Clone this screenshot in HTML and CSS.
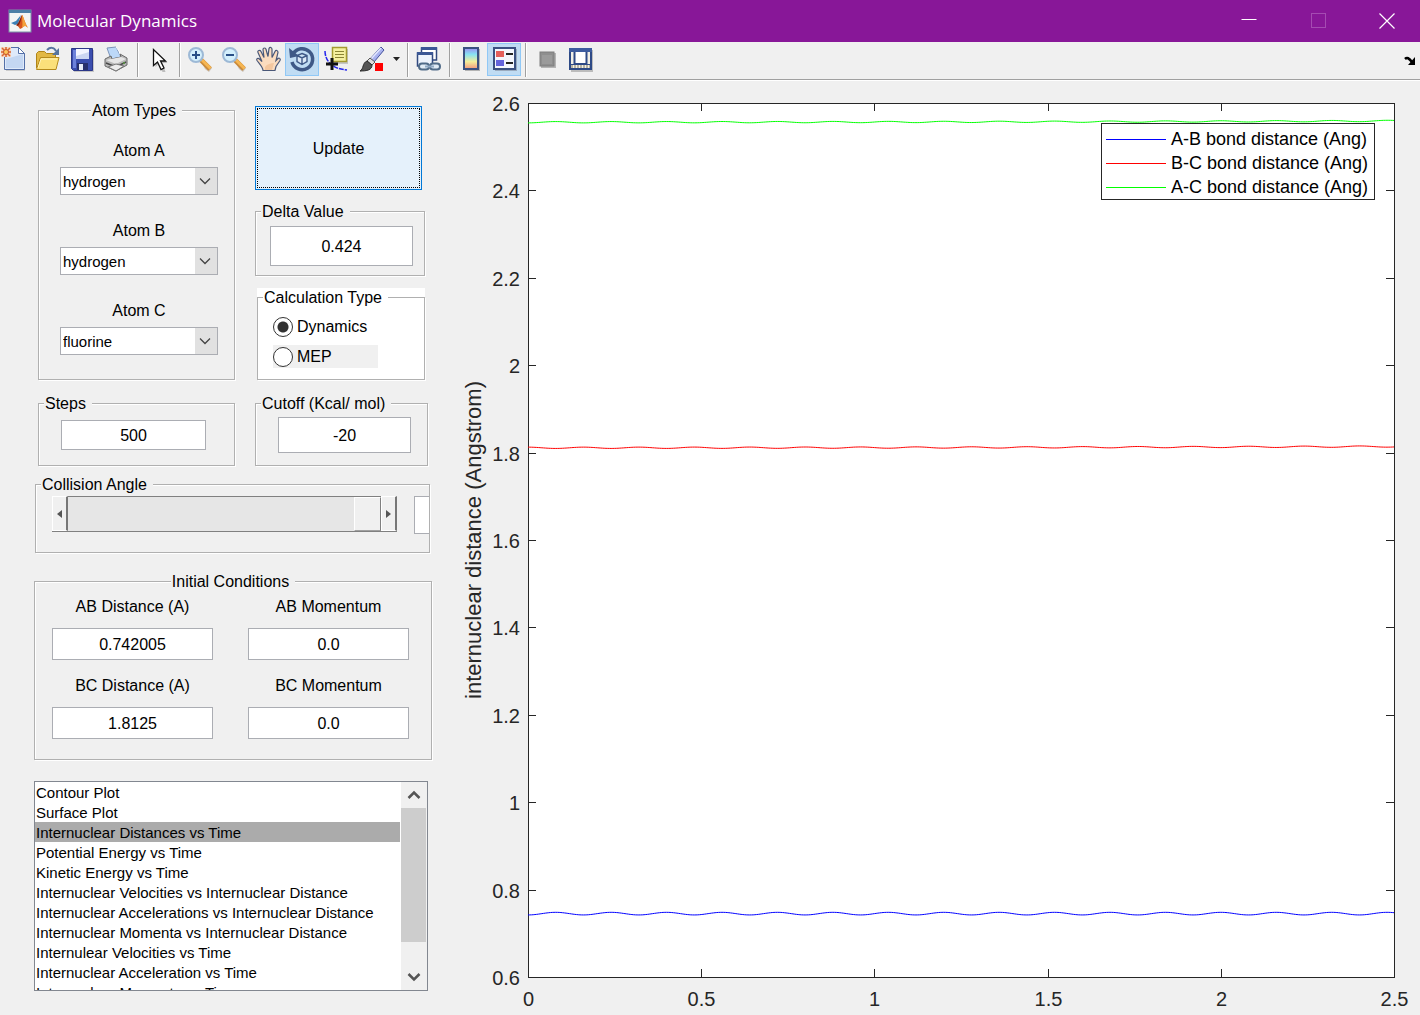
FILE: index.html
```html
<!DOCTYPE html>
<html lang="en">
<head>
    <meta charset="UTF-8">
    <meta name="viewport" content="width=device-width, initial-scale=1.0">
    <title>Molecular Dynamics</title>
    <link rel="stylesheet" href="styles.css">
</head>
<body>
    <header class="titlebar">
        <svg class="app-icon" width="24" height="24" viewBox="0 0 24 24" aria-hidden="true">
            <rect x="1" y="1" width="22" height="22" fill="#f4f4f4" stroke="#7b93a8"/>
            <rect x="1" y="1" width="22" height="3" fill="#4d7fa6"/>
            <path d="M3 14l5-2 5-6-3 9-3 1z" fill="#3c7fb5"/>
            <path d="M8 16c3-1 4-7 6-10 1 0 2 6 6 13-3-3-4-2-6 0l-2 1c-1-2-2-3-4-4z" fill="#d9541e"/>
            <path d="M14 6c1 0 2 6 6 13-3-3-4-2-6 0 1-4 0-9 0-13z" fill="#f3a13a"/>
            <path d="M8 16c3-1 4-7 6-10-1 5-2 9-4 11z" fill="#7a2318"/>
        </svg>
        <h1>Molecular Dynamics</h1>
        <div class="window-buttons">
            <button type="button" aria-label="Minimize"><svg width="16" height="16"><path d="M0.5 6.5h15" stroke="#fff"/></svg></button>
            <button type="button" aria-label="Maximize" disabled><svg width="16" height="16"><rect x="0.5" y="0.5" width="14" height="14" fill="none" stroke="#a54bb2"/></svg></button>
            <button type="button" aria-label="Close"><svg width="16" height="16"><path d="M0.5 0.5l15 15M15.5 0.5l-15 15" stroke="#fff" stroke-width="1.2"/></svg></button>
        </div>
    </header>

    <nav class="toolbar">
        <button type="button" class="tool" title="New Figure">
            <svg viewBox="0 0 34 33">
                <path d="M9 6.500h13l6 6V28H9z" fill="#a8a8a8" opacity=".5"/>
                <path d="M7.500 4.500h14l6 6v16h-20z" fill="#dfeafa" stroke="#5470a8"/>
                <path d="M9 16l17-5v14H9z" fill="#c4d7f2"/>
                <path d="M21.500 4.500v6h6z" fill="#fff" stroke="#5470a8"/>
                <rect x="4" y="4" width="10" height="10" fill="#f6d4c0"/>
                <path d="M9 4v10M4 9h10M5 5l8 8M13 5l-8 8" stroke="#d9662f" stroke-width="1.500"/>
                <circle cx="9" cy="9" r="2.500" fill="#ffc65c" stroke="#c7552b"/>
            </svg>
        </button>
        <button type="button" class="tool" title="Open File">
            <svg viewBox="0 0 34 33">
                <path d="M5.500 25V10.500l2-2h6l2 2h9v4" fill="#e2b844" stroke="#b08518"/>
                <path d="M5.500 26.500l4-12h18.500l-3 12z" fill="#fbe07a" stroke="#b58a1c"/>
                <path d="M7 25l3-9h16" fill="none" stroke="#fff3b8"/>
                <path d="M16 7c3-3 7-3 9 1" fill="none" stroke="#56749f" stroke-width="2"/>
                <path d="M28 5v7h-7z" fill="#56749f"/>
            </svg>
        </button>
        <button type="button" class="tool" title="Save Figure">
            <svg viewBox="0 0 34 33">
                <path d="M8 7h21v22H9z" fill="#aaa" opacity=".6"/>
                <path d="M6.500 5.500h21v22h-19l-2-2z" fill="#3b4eae" stroke="#2b3788"/>
                <path d="M8 7h3v18H8z" fill="#6d82da"/>
                <path d="M11 6h13v10H11z" fill="#f2f5ff"/>
                <path d="M24 16L11 16V13L24 9z" fill="#cbd6f2"/>
                <path d="M12 20h11v7H12z" fill="#28306c"/>
                <path d="M14 21h4v6h-4z" fill="#e8ecf7"/>
            </svg>
        </button>
        <button type="button" class="tool" title="Print Figure">
            <svg viewBox="0 0 34 33">
                <path d="M8 5l9-1 5 10-10 2z" fill="#bcd8f8" stroke="#7b93b8"/>
                <path d="M17 4l3 4 2 6" fill="none" stroke="#fff"/>
                <path d="M6 16l6-3 1 3 9-2-1-3 7 4v7l-11 6-11-5z" fill="#b9b9b9" stroke="#686868"/>
                <path d="M7 17l10 4 10-5-5-2-10 2z" fill="#e6e6e6"/>
                <path d="M7 20l10 4 10-5" fill="none" stroke="#484848" stroke-width="1.500"/>
                <path d="M9 24l8-3 8 2-8 5z" fill="#ececec" stroke="#777"/>
                <circle cx="25" cy="20" r="1" fill="#5a9b42"/>
            </svg>
        </button>
        <span class="separator"></span>
        <button type="button" class="tool" title="Edit Plot">
            <svg viewBox="0 0 34 33">
                <path d="M14.500 8v16l3-3 4 8h3l-3-9h5z" fill="#999" opacity=".6"/>
                <path d="M12.500 6.500v16l4-3.500 3.500 7.500 3-1.500-3.500-7h5z" fill="#fff" stroke="#111" stroke-width="1.300"/>
            </svg>
        </button>
        <span class="separator"></span>
        <button type="button" class="tool" title="Zoom In">
            <svg viewBox="0 0 34 33">
                <path d="M18 18l3-1 8 8-3 4-4-3z" fill="#b0a090" opacity=".6"/>
                <path d="M18 17l9 9" stroke="#c98a3c" stroke-width="5"/>
                <path d="M19 17l8.500 8.500" stroke="#f6b652" stroke-width="3"/>
                <circle cx="13" cy="12" r="7" fill="#d3effc" stroke="#9db9d6" stroke-width="2"/>
                <path d="M13 8v8M9 12h8" stroke="#284f87" stroke-width="2"/>
            </svg>
        </button>
        <button type="button" class="tool" title="Zoom Out">
            <svg viewBox="0 0 34 33">
                <path d="M18 18l3-1 8 8-3 4-4-3z" fill="#b0a090" opacity=".6"/>
                <path d="M18 17l9 9" stroke="#c98a3c" stroke-width="5"/>
                <path d="M19 17l8.500 8.500" stroke="#f6b652" stroke-width="3"/>
                <circle cx="13" cy="12" r="7" fill="#d3effc" stroke="#9db9d6" stroke-width="2"/>
                <path d="M9 12h8" stroke="#284f87" stroke-width="2"/>
            </svg>
        </button>
        <button type="button" class="tool" title="Pan">
            <svg viewBox="0 0 34 33">
                <path d="M12 27.500c0-3-3-6-6-10-1-2 1-3 3-1l2 2-4-9c-1-2 2-3 3-1l3 6-1-8c0-2 3-2 3 0l2 7 1-8c1-2 3-1 3 1v8l3-6c1-2 3-1 3 1l-2 8 2-2c1-1 3 0 2 2l-4 6-1 4z" fill="#fbdcbf" stroke="#4a5878" stroke-width="1.200"/>
                <path d="M14 24c2-3 6-4 9-4l-2 7h-7z" fill="#f4c79f"/>
            </svg>
        </button>
        <button type="button" class="tool active" title="Rotate 3D">
            <svg viewBox="0 0 34 33">
                <path d="M8 11a10.500 10.500 0 1 1-1 8" fill="none" stroke="#3f5987" stroke-width="3.500"/>
                <path d="M4 5l1 10 9-2z" fill="#3f5987"/>
                <path d="M17 10.500l5 2v6l-5 3-5-3v-6zM12 12.500l5 2.500 5-2.500M17 15v6" fill="#dbe8f6" stroke="#3f5987" stroke-width="1.400"/>
            </svg>
        </button>
        <button type="button" class="tool" title="Data Cursor">
            <svg viewBox="0 0 34 33">
                <path d="M15 6h14v15H15z" fill="#aaa" opacity=".6"/>
                <path d="M13.500 4.500h14v14h-14z" fill="#f5f0a0" stroke="#a49a30" stroke-width="1.500"/>
                <path d="M16 8.500h9M16 11.500h9M16 14.500h9" stroke="#8a8434"/>
                <path d="M6 8c0 5 2 10 6 13 4 4 8 5 16 6" fill="none" stroke="#2626ee" stroke-width="1.500" stroke-dasharray="5 1"/>
                <path d="M13 15v12M7 21h12" stroke="#111" stroke-width="3"/>
            </svg>
        </button>
        <button type="button" class="tool" title="Brush Data">
            <svg viewBox="0 0 34 33">
                <path d="M28 4l3 3-10 12-4-3z" fill="#a9b2ee" stroke="#44509c"/>
                <path d="M28 5L18 16" stroke="#e4e8ff" stroke-width="1.500"/>
                <path d="M17 15l5 4-3 3-5-4z" fill="#ddd" stroke="#555"/>
                <path d="M14 18l5 4c0 5-5 6-12 6 4-2 2-8 7-10z" fill="#555" stroke="#2b2b2b"/>
                <rect x="22" y="20" width="8" height="8" fill="#f00"/>
            </svg>
        </button>
        <button type="button" class="tool tool-caret" title="Brush options">
            <svg viewBox="0 0 16 33"><path d="M6 14h7l-3.500 4z" fill="#222"/></svg>
        </button>
        <span class="separator"></span>
        <button type="button" class="tool" title="Link Plot">
            <svg viewBox="0 0 34 33">
                <rect x="10.500" y="5" width="15" height="12" fill="#fff" stroke="#31497f" stroke-width="1.500"/>
                <path d="M10 4h16v3H10z" fill="#3b5795"/>
                <rect x="6.500" y="10" width="15" height="13" fill="#edf3fc" stroke="#31497f" stroke-width="1.500"/>
                <path d="M6 9h16v3H6z" fill="#3b5795"/>
                <rect x="8" y="20.500" width="10" height="6" rx="3" fill="#e0ebf5" stroke="#506b88" stroke-width="2"/>
                <rect x="19" y="20.500" width="10" height="6" rx="3" fill="#e0ebf5" stroke="#506b88" stroke-width="2"/>
                <path d="M14 23.500h9" stroke="#8fa9c4" stroke-width="2"/>
            </svg>
        </button>
        <span class="separator"></span>
        <button type="button" class="tool" title="Insert Colorbar">
            <svg viewBox="0 0 34 33">
                <defs>
                    <linearGradient id="colorbar" x1="0" y1="0" x2="0" y2="1">
                        <stop offset="0" stop-color="#9d8cf0"/>
                        <stop offset=".3" stop-color="#86e2f4"/>
                        <stop offset=".65" stop-color="#f4ee9a"/>
                        <stop offset="1" stop-color="#f4957c"/>
                    </linearGradient>
                </defs>
                <path d="M12 6h15v22H12z" fill="#999" opacity=".7"/>
                <rect x="11" y="5" width="14" height="21" fill="url(#colorbar)" stroke="#3a5080" stroke-width="2"/>
            </svg>
        </button>
        <button type="button" class="tool active" title="Insert Legend">
            <svg viewBox="0 0 34 33">
                <path d="M8 6h22v22H8z" fill="#8a96a8" opacity=".7"/>
                <rect x="7" y="5" width="21" height="21" fill="#f3f6fd" stroke="#3a5080" stroke-width="2"/>
                <rect x="9" y="8" width="8" height="6" fill="#e4605c"/>
                <rect x="9" y="17" width="8" height="6" fill="#6464dc"/>
                <path d="M19 11h7M19 20h7" stroke="#222" stroke-width="2"/>
            </svg>
        </button>
        <span class="separator"></span>
        <button type="button" class="tool" title="Hide Plot Tools">
            <svg viewBox="0 0 34 33">
                <path d="M12 10h15v15H12z" fill="#b5b5b5"/>
                <rect x="11" y="9" width="14" height="14" fill="#8f8f8f" stroke="#7f7f7f"/>
                <rect x="13" y="12" width="10" height="9" fill="#9b9b9b"/>
            </svg>
        </button>
        <button type="button" class="tool" title="Show Plot Tools and Dock Figure">
            <svg viewBox="0 0 34 33">
                <path d="M8 7h22v22H8z" fill="#999" opacity=".6"/>
                <rect x="7" y="6" width="21" height="20" fill="#f2f0e6" stroke="#2e4a86" stroke-width="2"/>
                <path d="M6 5h23v4H6z" fill="#3d5c9e"/>
                <path d="M8 23.500h19" stroke="#b9b5a4" stroke-width="3" stroke-dasharray="2 1"/>
                <path d="M11.500 9v12h12V9" fill="#fff" stroke="#2e4a86" stroke-width="2"/>
                <path d="M7 21.500h21" stroke="#2e4a86"/>
            </svg>
        </button>
        <button type="button" class="dock-button" title="Dock Figure">
            <svg width="12" height="10"><path d="M1 3c2-2 4-1 7 3" fill="none" stroke="#000" stroke-width="2.500"/><path d="M11 1v8H4z" fill="#000"/></svg>
        </button>
    </nav>

    <main class="workspace">
        <form class="sidebar" onsubmit="return false">
            <div class="row">
                <fieldset class="panel">
                    <legend class="centered">Atom Types</legend>
                    <div class="atoms">
                        <div class="atom">
                            <label for="atomA">Atom A</label>
                            <select id="atomA"><option>hydrogen</option><option>fluorine</option></select>
                        </div>
                        <div class="atom">
                            <label for="atomB">Atom B</label>
                            <select id="atomB"><option>hydrogen</option><option>fluorine</option></select>
                        </div>
                        <div class="atom">
                            <label for="atomC">Atom C</label>
                            <select id="atomC"><option>hydrogen</option><option selected>fluorine</option></select>
                        </div>
                    </div>
                </fieldset>
                <div class="stack">
                    <button type="submit" class="update">Update</button>
                    <fieldset class="panel delta">
                        <legend>Delta Value</legend>
                        <input type="text" value="0.424" aria-label="Delta Value">
                    </fieldset>
                    <div class="calculation">
                        <fieldset class="panel">
                            <legend>Calculation Type</legend>
                            <div class="radios">
                                <label><input type="radio" name="calculation" checked>Dynamics</label>
                                <label class="shaded"><input type="radio" name="calculation">MEP</label>
                            </div>
                        </fieldset>
                    </div>
                </div>
            </div>

            <div class="row row-limits">
                <fieldset class="panel steps">
                    <legend>Steps</legend>
                    <input type="text" value="500" aria-label="Steps">
                </fieldset>
                <fieldset class="panel cutoff">
                    <legend>Cutoff (Kcal/ mol)</legend>
                    <input type="text" value="-20" aria-label="Cutoff">
                </fieldset>
            </div>

            <fieldset class="panel collision">
                <legend>Collision Angle</legend>
                <div class="angle">
                    <div class="slider">
                        <button type="button" aria-label="Decrease angle"><svg width="5" height="8"><path d="M5 0v8L0 4z" fill="#555"/></svg></button>
                        <input type="range" min="0" max="180" value="180" aria-label="Collision Angle">
                        <button type="button" aria-label="Increase angle"><svg width="5" height="8"><path d="M0 0v8l5-4z" fill="#555"/></svg></button>
                    </div>
                    <input type="text" class="angle-value" aria-label="Angle value">
                </div>
            </fieldset>

            <fieldset class="panel initial">
                <legend class="centered">Initial Conditions</legend>
                <div class="conditions">
                    <div class="condition">
                        <label for="abDistance">AB Distance (A)</label>
                        <input type="text" id="abDistance" value="0.742005">
                    </div>
                    <div class="condition">
                        <label for="abMomentum">AB Momentum</label>
                        <input type="text" id="abMomentum" value="0.0">
                    </div>
                    <div class="condition">
                        <label for="bcDistance">BC Distance (A)</label>
                        <input type="text" id="bcDistance" value="1.8125">
                    </div>
                    <div class="condition">
                        <label for="bcMomentum">BC Momentum</label>
                        <input type="text" id="bcMomentum" value="0.0">
                    </div>
                </div>
            </fieldset>

            <div class="plot-box">
                <select class="plot-list" id="plotList" size="10" aria-label="Plot type">
                    <option>Contour Plot</option>
                    <option>Surface Plot</option>
                    <option selected>Internuclear Distances vs Time</option>
                    <option>Potential Energy vs Time</option>
                    <option>Kinetic Energy vs Time</option>
                    <option>Internuclear Velocities vs Internuclear Distance</option>
                    <option>Internuclear Accelerations vs Internuclear Distance</option>
                    <option>Internuclear Momenta vs Internuclear Distance</option>
                    <option>Internulear Velocities vs Time</option>
                    <option>Internuclear Acceleration vs Time</option>
                    <option>Internuclear Momenta vs Time</option>
                    <option>Animation</option>
                </select>
                <div class="scrollbar">
                    <button type="button" id="scrollUp" aria-label="Scroll up"><svg width="14" height="10"><path d="M1.500 8L7 2.500 12.500 8" fill="none" stroke="#555" stroke-width="2.500"/></svg></button>
                    <div class="scroll-track"><div class="scroll-thumb"></div></div>
                    <button type="button" id="scrollDown" aria-label="Scroll down"><svg width="14" height="10"><path d="M1.500 2L7 7.500 12.500 2" fill="none" stroke="#555" stroke-width="2.500"/></svg></button>
                </div>
            </div>
        </form>

        <section class="chart">
            <svg id="plot" role="img" aria-label="Internuclear distances vs time"></svg>
            <ul class="chart-legend">
                <li><span class="swatch blue"></span>A-B bond distance (Ang)</li>
                <li><span class="swatch red"></span>B-C bond distance (Ang)</li>
                <li><span class="swatch green"></span>A-C bond distance (Ang)</li>
            </ul>
        </section>
    </main>

    <script>
        const plot = document.getElementById('plot');
        const margin = { top: 22, right: 26, bottom: 38, left: 88 };
        const tick = 8;

        // Vibration of the H-H bond with the F atom far away
        const swing = t => 1 - Math.cos(2 * Math.PI * t / 0.16);
        const drift = t => 0.003 * (t / 2.5) ** 2;
        const ab = t => 0.742 + 0.003 * swing(t);
        const bc = t => 1.8125 - 0.0015 * swing(t) + drift(t);
        const series = [
            { color: '#0000ff', value: ab },
            { color: '#ff0000', value: bc },
            { color: '#00ff00', value: t => ab(t) + bc(t) }
        ];

        function draw() {
            const width = plot.clientWidth;
            const height = plot.clientHeight;
            const right = width - margin.right;
            const bottom = height - margin.bottom;
            const x = t => margin.left + t / 2.5 * (right - margin.left);
            const y = v => bottom - (v - 0.6) / 2 * (bottom - margin.top);
            let out = `<rect class="axes" x="${margin.left}.5" y="${margin.top}.5" width="${right - margin.left}" height="${bottom - margin.top}"/>`;

            for (let i = 0; i <= 5; i++) {
                const px = Math.round(x(i / 2)) + 0.5;
                out += `<path class="tick" d="M${px} ${bottom}v-${tick}M${px} ${margin.top}v${tick}"/>`;
                out += `<text x="${px}" y="${bottom + 29}" text-anchor="middle">${i / 2}</text>`;
            }
            for (let i = 0; i <= 10; i++) {
                const value = (6 + 2 * i) / 10;
                const py = Math.round(y(value)) + 0.5;
                out += `<path class="tick" d="M${margin.left} ${py}h${tick}M${right} ${py}h-${tick}"/>`;
                out += `<text x="${margin.left - 8}" y="${py + 7}" text-anchor="end">${value}</text>`;
            }
            const middle = (margin.top + bottom) / 2;
            out += `<text class="axis-title" transform="translate(41 ${middle}) rotate(-90)" text-anchor="middle">internuclear distance (Angstrom)</text>`;

            for (const line of series) {
                let points = '';
                for (let t = 0; t <= 2.5; t += 0.005) {
                    points += `${x(t).toFixed(2)},${y(line.value(t)).toFixed(2)} `;
                }
                out += `<polyline points="${points}" fill="none" stroke="${line.color}"/>`;
            }
            plot.innerHTML = out;
        }

        window.addEventListener('resize', draw);
        draw();

        // Scroll buttons next to the plot list
        const plotList = document.getElementById('plotList');
        document.getElementById('scrollUp').addEventListener('click', () => plotList.scrollTop -= 20);
        document.getElementById('scrollDown').addEventListener('click', () => plotList.scrollTop += 20);
    </script>
</body>
</html>
```
FILE: styles.css
```css
* {
    box-sizing: border-box;
}
body {
    margin: 0;
    min-height: 100vh;
    display: flex;
    flex-direction: column;
    background: #f0f0f0;
    color: #000;
    font-family: "Liberation Sans", Arial, sans-serif;
    font-size: 16px;
    line-height: 20px;
}
button, input, select {
    font: inherit;
    color: inherit;
    margin: 0;
    padding: 0;
    border-radius: 0;
}

/* Title bar */
.titlebar {
    display: flex;
    align-items: center;
    height: 42px;
    padding-left: 8px;
    background: #881798;
    color: #fff;
}
.titlebar h1 {
    flex: 1;
    margin: 0 0 0 5px;
    font-family: "Open Sans", "Noto Sans", sans-serif;
    font-size: 17px;
    font-weight: normal;
}
.window-buttons {
    display: flex;
}
.window-buttons button {
    display: flex;
    align-items: center;
    justify-content: center;
    width: 70px;
    height: 40px;
    border: none;
    background: none;
}
.window-buttons button:last-child {
    width: 66px;
}

/* Toolbar */
.toolbar {
    display: flex;
    height: 38px;
    padding-top: 1px;
    border-bottom: 1px solid #a0a0a0;
}
.tool {
    width: 34px;
    height: 33px;
    border: none;
    background: none;
}
.tool:first-child {
    margin-left: -3px;
}
.tool svg {
    display: block;
    width: 100%;
    height: 33px;
}
.tool.active {
    background: #c0dcf3;
    box-shadow: inset 0 0 0 1px #90c8f6;
}
.tool-caret {
    width: 16px;
}
.separator {
    width: 2px;
    height: 34px;
    margin: 0 2px 0 4px;
    background: linear-gradient(to right, #a0a0a0 50%, #fff 50%);
}
.dock-button {
    margin-left: auto;
    padding: 0 4px;
    border: none;
    background: none;
}

/* Left side */
.workspace {
    flex: 1;
    display: flex;
    border-top: 1px solid #fff;
}
.sidebar {
    flex: none;
    width: 440px;
    padding: 20px 0 22px 34px;
}
.panel {
    min-width: 0;
    margin: 0;
    padding: 0;
    border: 1px solid #b0b0b0;
    box-shadow: 1px 1px 0 #fff, inset 1px 1px 0 #fff;
}
.panel legend {
    height: 18px;
    margin-left: 5px;
    padding: 0 6px 0 1px;
    background: #f0f0f0;
    line-height: 20px;
}
.panel legend.centered {
    margin: 0 auto;
}
input[type="text"] {
    display: block;
    padding-top: 1px;
    border: 1px solid #abadb3;
    background: #fff;
    text-align: center;
}
.row {
    display: grid;
    grid-template-columns: 197px 173px;
    align-items: start;
    gap: 20px;
    padding-left: 4px;
}
.atoms {
    display: grid;
    gap: 26px;
    padding: 22px 16px 24px 21px;
}
.atom {
    display: grid;
    gap: 6px;
    text-align: center;
}
.atom select {
    appearance: none;
    height: 28px;
    padding: 2px 24px 0 2px;
    border: 1px solid #abadb3;
    background: url("data:image/svg+xml,%3Csvg xmlns='http://www.w3.org/2000/svg' width='22' height='26'%3E%3Crect width='22' height='26' fill='%23e1e1e1'/%3E%3Cpath d='M5 10.500l5 5 5-5' fill='none' stroke='%23444' stroke-width='1.300'/%3E%3C/svg%3E") no-repeat right top #fff;
    font-size: 15px;
}
.stack {
    display: flex;
    flex-direction: column;
    gap: 12px;
    padding-top: 5px;
}
.update {
    width: 167px;
    height: 84px;
    padding-top: 2px;
    border: 1px solid #0078d7;
    background: #e5f1fb;
    outline: 1px dotted #000;
    outline-offset: -3px;
}
.delta {
    width: 170px;
    height: 74px;
}
.delta input {
    width: 143px;
    height: 40px;
    margin: 6px 0 0 14px;
}
.calculation {
    width: 168px;
    margin-left: 2px;
    background: #fff;
}
.calculation legend {
    background: #fff;
}
.radios {
    display: grid;
    gap: 7px;
    padding: 9px 0 11px 15px;
}
.radios label {
    display: flex;
    align-items: center;
    gap: 4px;
    width: 105px;
    height: 23px;
}
.shaded {
    background: #f0f0f0;
}
input[type="radio"] {
    appearance: none;
    width: 20px;
    height: 20px;
    border: 1px solid #333;
    border-radius: 50%;
    background: #fff;
}
input[type="radio"]:checked {
    background: radial-gradient(circle, #333 5px, #fff 6px);
}
.row-limits {
    margin-top: 14px;
}
.row-limits .panel {
    height: 72px;
}
.steps input {
    width: 145px;
    height: 30px;
    margin: 8px 0 0 22px;
}
.cutoff input {
    width: 133px;
    height: 36px;
    margin: 5px 0 0 22px;
}
.collision {
    width: 395px;
    height: 78px;
    margin: 9px 0 0 1px;
}
.angle {
    display: flex;
    gap: 17px;
    padding: 3px 0 0 16px;
    overflow: hidden;
}
.slider {
    flex: none;
    display: flex;
    width: 345px;
    height: 36px;
    border: solid #808080;
    border-width: 0 0 1px;
}
.slider button {
    display: flex;
    align-items: center;
    justify-content: center;
    width: 16px;
    border: 1px solid #fff;
    border-right: 2px solid #777;
    background: #f0f0f0;
}
.slider input {
    flex: 1;
    min-width: 0;
    appearance: none;
    border-top: 1px solid #808080;
    background: #e6e6e6;
}
.slider input::-webkit-slider-thumb {
    appearance: none;
    width: 27px;
    height: 34px;
    border: 1px solid #fff;
    border-right-color: #808080;
    border-bottom-color: #a0a0a0;
    background: #f0f0f0;
}
.angle-value {
    flex: none;
    width: 60px;
    height: 38px;
}
.initial {
    width: 398px;
    height: 188px;
    margin-top: 19px;
}
.conditions {
    display: grid;
    grid-template-columns: 161px 161px;
    gap: 16px 35px;
    padding: 7px 0 0 17px;
}
.condition {
    display: grid;
    gap: 11px;
    text-align: center;
}
.condition input {
    width: 100%;
    height: 32px;
}

/* List of plots */
.plot-box {
    display: flex;
    width: 394px;
    height: 210px;
    margin-top: 21px;
    border: 1px solid #828790;
    background: #fff;
}
.plot-list {
    flex: 1;
    min-width: 0;
    border: none;
    background: #fff;
    font-size: 15px;
    overflow-y: scroll;
    scrollbar-width: none;
}
.plot-list option {
    height: 20px;
    min-height: 20px;
    padding: 2px 1px 0;
}
.plot-list option:checked {
    background: linear-gradient(#ababab, #ababab);
    color: #000;
}
.scrollbar {
    display: flex;
    flex-direction: column;
    width: 26px;
    margin-left: 1px;
    padding-right: 1px;
    background: #f0f0f0;
}
.scrollbar button {
    display: flex;
    align-items: center;
    justify-content: center;
    height: 26px;
    border: none;
    background: none;
}
.scroll-track {
    flex: 1;
}
.scroll-thumb {
    height: 86%;
    background: #cdcdcd;
}

/* Chart */
.chart {
    position: relative;
    flex: 1;
    display: flex;
    min-width: 0;
}
#plot {
    flex: 1;
    min-width: 0;
    font-size: 20px;
    fill: #262626;
}
#plot .axes {
    fill: #fff;
    stroke: #262626;
    shape-rendering: crispEdges;
}
#plot .tick {
    stroke: #262626;
    shape-rendering: crispEdges;
}
#plot .axis-title {
    font-size: 22px;
}
.chart-legend {
    position: absolute;
    top: 42px;
    right: 45px;
    margin: 0;
    padding: 3px 6px 0 4px;
    border: 1px solid #262626;
    background: #fff;
    font-size: 18px;
    line-height: 24px;
    list-style: none;
}
.chart-legend li {
    display: flex;
    align-items: center;
    gap: 5px;
}
.swatch {
    width: 60px;
    height: 1px;
}
.blue {
    background: #0000ff;
}
.red {
    background: #ff0000;
}
.green {
    background: #00ff00;
}
```
